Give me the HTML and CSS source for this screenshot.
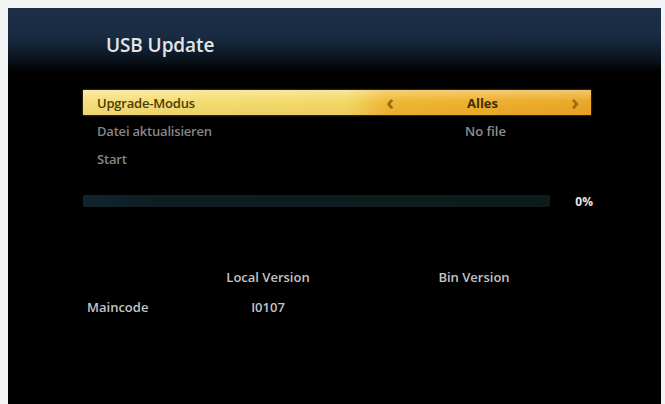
FILE: index.html
```html
<!DOCTYPE html>
<html>
<head>
<meta charset="utf-8">
<link rel="stylesheet" href="styles.css">
</head>
<body>
<div class="screen">
  <div class="header"><h1 class="title">USB Update</h1></div>
  <div class="content">
    <div class="menu">
      <div class="row row-active">
        <span class="label">Upgrade-Modus</span>
        <span class="value"><span class="arrow">&lsaquo;</span><span class="val-text">Alles</span><span class="arrow">&rsaquo;</span></span>
      </div>
      <div class="row">
        <span class="label">Datei aktualisieren</span>
        <span class="value"><span class="val-text">No file</span></span>
      </div>
      <div class="row">
        <span class="label">Start</span>
      </div>
    </div>
    <div class="progress">
      <div class="bar"></div>
      <span class="pct">0%</span>
    </div>
    <div class="versions">
      <span class="head col-local">Local Version</span>
      <span class="head col-bin">Bin Version</span>
      <span class="name">Maincode</span>
      <span class="head col-local">I0107</span>
    </div>
  </div>
</div>
</body>
</html>
```
FILE: styles.css
```css
html, body {
  margin: 0;
  padding: 0;
  background: #f3f4f4;
}
body {
  font-family: "Open Sans", "DejaVu Sans", sans-serif;
}
.screen {
  margin: 8px 0 0 8px;
  width: 653px;
  height: 396px;
  background: #000;
  overflow: hidden;
}
.header {
  height: 64px;
  background: linear-gradient(to bottom, #1d2f47 0%, #182b42 45%, #0b141e 80%, #000 100%);
  padding-left: 98px;
  box-sizing: border-box;
  padding-top: 25px;
}
.title {
  margin: 0;
  font-size: 19px;
  line-height: 24px;
  font-weight: 600;
  color: #e2e6ea;
  letter-spacing: -0.1px;
}
.content {
  padding: 18px 70px 0 75px;
}
.menu {
  display: flex;
  flex-direction: column;
  gap: 3px;
}
.row {
  display: flex;
  align-items: center;
  height: 25px;
  font-size: 13px;
  font-weight: 600;
  color: #858585;
}
.row-active {
  color: #4a3c06;
  background:
    linear-gradient(to bottom, rgba(255,255,255,0.35) 0%, rgba(255,255,255,0) 45%, rgba(120,70,0,0.08) 100%),
    linear-gradient(to right, #f6e07c 0%, #f4d866 52%, #f0b834 60%, #eca828 100%);
  box-shadow: 0 0 2px rgba(240,200,80,0.5);
}
.label {
  width: 297px;
  padding-left: 14px;
  box-sizing: border-box;
  letter-spacing: -0.2px;
}
.value {
  flex: 1;
  display: flex;
  justify-content: center;
  align-items: center;
  color: #8e8e8e;
  height: 100%;
}
.row-active .value {
  justify-content: space-between;
  padding: 0 12px 0 6px;
  color: #3e3004;
}
.row-active .arrow {
  font-size: 22px;
  line-height: 1;
  font-weight: 700;
  color: #9a6c0c;
  margin-top: -4px;
}
.val-text {
  font-weight: 600;
}
.row-active .val-text {
  font-weight: 700;
}
.progress {
  display: flex;
  align-items: center;
  margin-top: 23px;
  height: 14px;
  margin-right: -2px;
}
.bar {
  flex: 1;
  height: 12px;
  background: linear-gradient(to right, #13242e 0%, #0e1d22 15%, #0d1b1a 100%);
  border-radius: 2px;
}
.pct {
  width: 43px;
  text-align: right;
  font-size: 12px;
  font-weight: 700;
  color: #e4e4e4;
}
.versions {
  display: grid;
  grid-template-columns: 130px 110px 96px 110px;
  margin-top: 54px;
  font-size: 13px;
  font-weight: 600;
  color: #c4c4c4;
  line-height: 30px;
}
.head {
  text-align: center;
}
.col-local {
  grid-column: 2;
}
.col-bin {
  grid-column: 4;
}
.name {
  grid-column: 1;
  padding-left: 4px;
}
```
